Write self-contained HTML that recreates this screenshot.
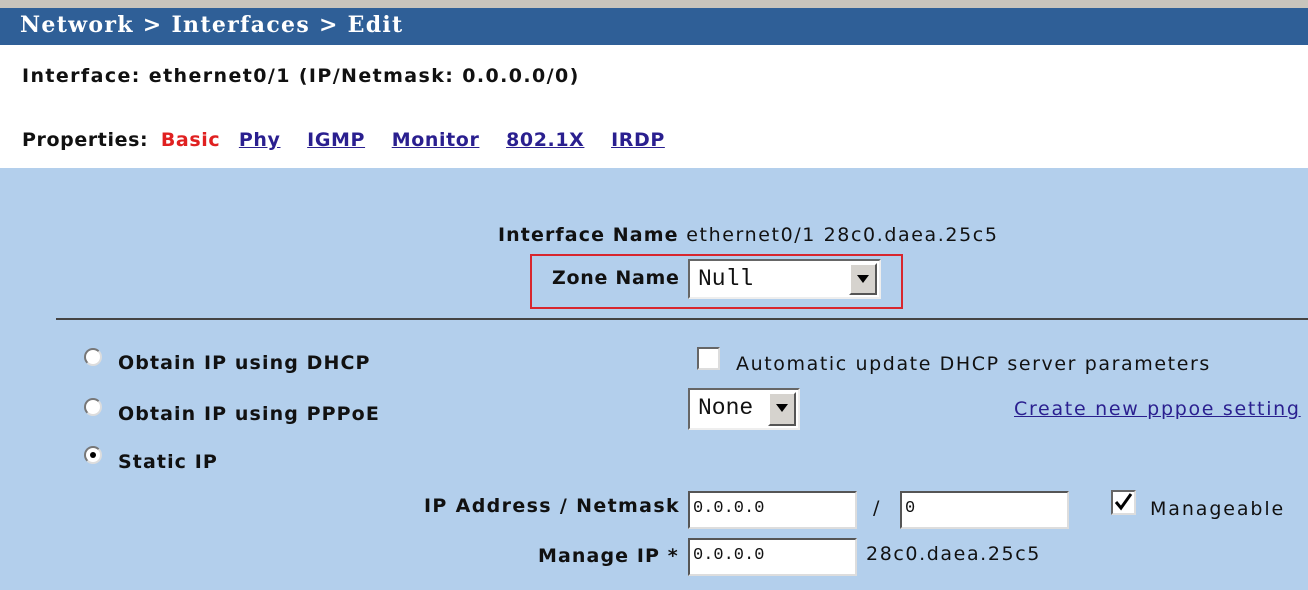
<!DOCTYPE html>
<html><head><meta charset="utf-8"><style>
*{margin:0;padding:0;box-sizing:border-box}
body{width:1308px;height:590px;overflow:hidden;background:#b3cfec;font-family:"DejaVu Sans","Liberation Sans",sans-serif;font-size:19px;color:#111;position:relative;letter-spacing:1.6px}
.a{position:absolute;white-space:nowrap}
b{font-weight:bold;letter-spacing:1.1px}
.lnk{color:#2a1f8f;text-decoration:underline;font-weight:bold}
.in{position:absolute;background:#fff;border:2px solid #555;border-right-color:#ddd;border-bottom-color:#ddd;font-family:"Liberation Mono",monospace;font-size:17px;padding:6px 3px;height:38px;letter-spacing:0}
.sel{position:absolute;background:#fff;border:2px solid #666;border-right-color:#eee;border-bottom-color:#eee;font-family:"Liberation Mono",monospace;font-size:23px;padding:5px 8px;letter-spacing:0}
.arr{position:absolute;top:2px;right:2px;width:28px;bottom:2px;background:#d6d3ce;border:2px solid #fff;border-right-color:#555;border-bottom-color:#555}
.arr:after{content:"";position:absolute;left:6px;top:10px;border-left:6px solid transparent;border-right:6px solid transparent;border-top:8px solid #000}
.radio{position:absolute;width:18px;height:18px;border-radius:50%;background:#fff;border:2px solid #777;border-right-color:#ddd;border-bottom-color:#ddd}
</style></head><body>
<div class="a" style="left:0;top:0;width:1308px;height:8px;background:#c8c4bc"></div>
<div class="a" style="left:0;top:8px;width:1308px;height:37px;background:#2f5f97;color:#fff;font-family:'DejaVu Serif',serif;font-weight:bold;font-size:22px;letter-spacing:1.3px;padding:4px 0 0 20px">Network &gt; Interfaces &gt; Edit</div>
<div class="a" style="left:0;top:45px;width:1308px;height:123px;background:#fff"></div>
<div class="a" style="left:22px;top:65px"><b style="letter-spacing:1.4px">Interface: ethernet0/1 (IP/Netmask: 0.0.0.0/0)</b></div>
<div class="a" style="left:22px;top:129px;letter-spacing:0.6px"><b style="letter-spacing:0.6px">Properties:</b> <b style="color:#e02020;margin-left:6px;letter-spacing:0.6px">Basic</b> <span class="lnk" style="margin-left:12px">Phy</span> <span class="lnk" style="margin-left:20px">IGMP</span> <span class="lnk" style="margin-left:20px">Monitor</span> <span class="lnk" style="margin-left:20px">802.1X</span> <span class="lnk" style="margin-left:20px">IRDP</span></div>
<div class="a" style="left:498px;top:224px"><b>Interface Name</b> ethernet0/1 28c0.daea.25c5</div>
<div class="a" style="left:530px;top:254px;width:373px;height:55px;border:2px solid #d8262e"></div>
<div class="a" style="left:552px;top:267px"><b style="letter-spacing:0.7px">Zone Name</b></div>
<div class="sel" style="left:688px;top:259px;width:193px;height:40px">Null<div class="arr"></div></div>
<div class="a" style="left:56px;top:318px;width:1252px;height:2px;background:#444"></div>
<div class="radio" style="left:84px;top:348px"></div>
<div class="a" style="left:118px;top:352px"><b>Obtain IP using DHCP</b></div>
<div class="radio" style="left:84px;top:398px"></div>
<div class="a" style="left:118px;top:403px"><b>Obtain IP using PPPoE</b></div>
<div class="radio" style="left:84px;top:446px"><div style="position:absolute;left:4px;top:4px;width:6px;height:6px;border-radius:50%;background:#000"></div></div>
<div class="a" style="left:118px;top:451px"><b>Static IP</b></div>
<div class="a" style="left:697px;top:347px;width:23px;height:23px;background:#fff;border:2px solid #666;border-right-color:#ddd;border-bottom-color:#ddd"></div>
<div class="a" style="left:736px;top:353px">Automatic update DHCP server parameters</div>
<div class="sel" style="left:688px;top:388px;width:112px;height:42px">None<div class="arr"></div></div>
<div class="a" style="left:1014px;top:398px;color:#2a1f8f;text-decoration:underline;letter-spacing:1.7px">Create new pppoe setting</div>
<div class="a" style="left:424px;top:495px"><b style="letter-spacing:1.35px">IP Address / Netmask</b></div>
<div class="in" style="left:688px;top:491px;width:169px">0.0.0.0</div>
<div class="a" style="left:873px;top:497px">/</div>
<div class="in" style="left:900px;top:491px;width:169px">0</div>
<div class="a" style="left:1111px;top:490px;width:25px;height:25px;background:#fff;border:2px solid #666;border-right-color:#ddd;border-bottom-color:#ddd">
<svg width="21" height="21" style="position:absolute;left:0;top:0"><path d="M3 10 L8 16 L18 2" stroke="#000" stroke-width="3" fill="none"/></svg></div>
<div class="a" style="left:1150px;top:498px;letter-spacing:1.9px">Manageable</div>
<div class="a" style="left:538px;top:545px"><b>Manage IP *</b></div>
<div class="in" style="left:688px;top:538px;width:169px">0.0.0.0</div>
<div class="a" style="left:866px;top:543px">28c0.daea.25c5</div>
</body></html>
